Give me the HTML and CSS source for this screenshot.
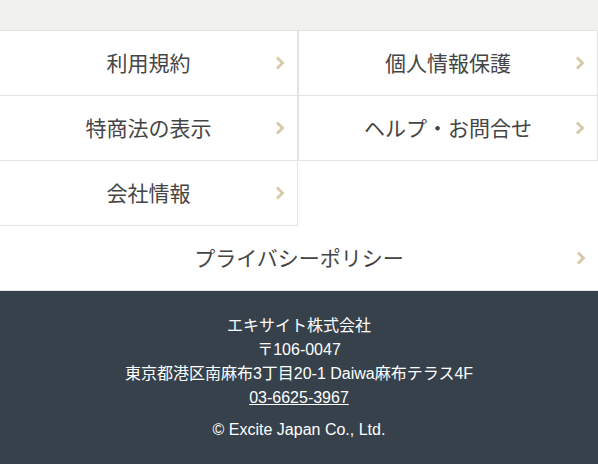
FILE: index.html
```html
<!DOCTYPE html>
<html lang="ja">
<head>
  <meta charset="UTF-8">
  <meta name="viewport" content="width=device-width, initial-scale=1.0">
  <title>エキサイト</title>
  <link rel="stylesheet" href="styles.css">
</head>
<body>
  <div class="top-band"></div>

  <nav class="footer-nav">
    <a class="nav-item left" href="#">
      <span class="label">利用規約</span>
      <svg class="chevron" viewBox="0 0 10 14"><polyline points="2,1.5 7.5,7 2,12.5" /></svg>
    </a>
    <a class="nav-item right" href="#">
      <span class="label">個人情報保護</span>
      <svg class="chevron" viewBox="0 0 10 14"><polyline points="2,1.5 7.5,7 2,12.5" /></svg>
    </a>
    <a class="nav-item left" href="#">
      <span class="label">特商法の表示</span>
      <svg class="chevron" viewBox="0 0 10 14"><polyline points="2,1.5 7.5,7 2,12.5" /></svg>
    </a>
    <a class="nav-item right" href="#">
      <span class="label">ヘルプ・お問合せ</span>
      <svg class="chevron" viewBox="0 0 10 14"><polyline points="2,1.5 7.5,7 2,12.5" /></svg>
    </a>
    <a class="nav-item left" href="#">
      <span class="label">会社情報</span>
      <svg class="chevron" viewBox="0 0 10 14"><polyline points="2,1.5 7.5,7 2,12.5" /></svg>
    </a>
    <div class="nav-empty"></div>
    <a class="nav-item wide" href="#">
      <span class="label">プライバシーポリシー</span>
      <svg class="chevron" viewBox="0 0 10 14"><polyline points="2,1.5 7.5,7 2,12.5" /></svg>
    </a>
  </nav>

  <footer class="site-footer">
    <p>エキサイト株式会社</p>
    <p>〒106-0047</p>
    <p>東京都港区南麻布3丁目20-1 Daiwa麻布テラス4F</p>
    <p><a href="#" class="tel">03-6625-3967</a></p>
    <p class="copyright">© Excite Japan Co., Ltd.</p>
  </footer>
</body>
</html>
```

FILE: styles.css
```css
body {
  margin: 0;
  padding: 0;
  background-color: #fff;
  font-family: "Liberation Sans", "Noto Sans CJK JP", sans-serif;
}
.top-band {
  height: 30px;
  background-color: #f1f1ed;
}
.footer-nav {
  display: grid;
  grid-template-columns: 298px 300px;
  border-top: 1px solid #e3e3e3;
}
.nav-item {
  box-sizing: border-box;
  height: 65px;
  display: grid;
  grid-template-columns: 1fr auto 1fr;
  align-items: center;
  border-bottom: 1px solid #e3e3e3;
  color: #454545;
  text-decoration: none;
  font-family: "Noto Sans CJK JP", sans-serif;
  font-size: 21px;
}
.nav-item.left {
  border-right: 1px solid #e3e3e3;
}
.nav-item.right {
  border-left: 1px solid #e3e3e3;
  border-right: 1px solid #e3e3e3;
}
.nav-item.wide {
  grid-column: 1 / 3;
}
.label {
  grid-column: 2;
  line-height: 1;
  padding-bottom: 2px;
}
.chevron {
  grid-column: 3;
  justify-self: end;
  width: 10px;
  height: 14px;
  margin-right: 12px;
  fill: none;
  stroke: #d8c8a6;
  stroke-width: 2.8;
}
.nav-item.left .chevron {
  margin-right: 12px;
}
.site-footer {
  background-color: #36414b;
  color: #fff;
  text-align: center;
  font-size: 16px;
  line-height: 24px;
  padding: 23px 0 30px;
  min-height: 120px;
}
.site-footer p {
  margin: 0;
}
.site-footer .tel {
  color: #fff;
  text-decoration: underline;
}
.site-footer .copyright {
  margin-top: 8px;
}
```
